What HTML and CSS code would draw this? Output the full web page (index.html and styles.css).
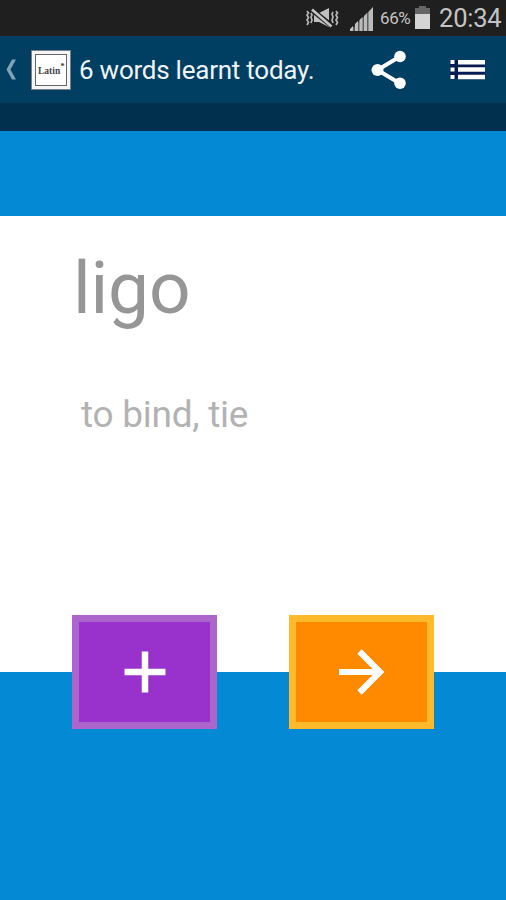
FILE: index.html
```html
<!DOCTYPE html>
<html lang="en">
<head>
<meta charset="utf-8">
<title>Latin words</title>
<link rel="stylesheet" href="styles.css">
</head>
<body>
<div class="app">
  <div class="status">
    <svg class="mute" width="34" height="22" viewBox="0 0 34 22">
      <path d="M9 6h5l10-5v19l-10-5H9z" fill="#c0c0c0"/>
      <path d="M7 3l20 16" stroke="#1f1f1f" stroke-width="5"/>
      <path d="M7 2.500l19.500 17" stroke="#c4c4c4" stroke-width="2.600"/>
      <path d="M2 4l1.500 2L2 8l1.500 2.500L2 13l1.500 2.500L2 18M6 6l1 2-1 2 1 3-1 3M28 5l-1 2 1 3-1 3 1 3M31 4l1.500 2L31 8l1.500 2.500L31 13l1.500 2.500L31 18" fill="none" stroke="#b5b5b5" stroke-width="1.700"/>
    </svg>
    <svg class="signal" width="24" height="26" viewBox="0 0 24 26">
      <path d="M0 25v-2l3-3v5zM5 25v-7l3-3v10zM9.500 25V14l3-3v14zM14 25V10l3-3v18zM18.500 25V6L23 1v24z" fill="#c8c8c8"/>
      <path d="M0 25L23 1v24z" fill="#aaa" opacity=".45"/>
    </svg>
    <span class="percent">66%</span>
    <svg class="battery" width="17" height="24" viewBox="0 0 17 24">
      <path d="M5 0h7v2h4v7H1V2h4z" fill="#666"/>
      <path d="M1 8h15v15H1z" fill="#d5d5d5"/>
    </svg>
    <span class="clock">20:34</span>
  </div>
  <header class="bar">
    <svg class="back" width="12" height="24" viewBox="0 0 12 24"><path d="M7 1.500h4L5.500 11.500 11 21.500H7L1.500 11.500z" fill="#7fa2b6"/></svg>
    <div class="logo"><div class="frame"><span class="word">Latin</span><span class="star">*</span></div></div>
    <h1 class="title">6 words learnt today.</h1>
    <svg class="share" width="36" height="40" viewBox="0 0 36 40">
      <path d="M29 6.500L6.500 20 29 33.500" fill="none" stroke="#fff" stroke-width="4"/>
      <circle cx="29" cy="6.500" r="5.800" fill="#fff"/><circle cx="6.500" cy="20" r="6" fill="#fff"/><circle cx="29" cy="33.200" r="5.800" fill="#fff"/>
    </svg>
    <svg class="list" width="36" height="20" viewBox="0 0 36 20">
      <path d="M0 0h35v19H0z" fill="#061b52"/>
      <path d="M.5 0h4v4h-4zM8 0h27v4.500H8zM.5 7.500h4v4h-4zM8 7.300h27v4.500H8zM.5 15h4v4h-4zM8 14.700h27v4.500H8z" fill="#fff"/>
    </svg>
  </header>
  <div class="shade"></div>
  <div class="band"></div>
  <main class="card">
    <div class="latin">ligo</div>
    <div class="meaning">to bind, tie</div>
  </main>
  <footer class="foot">
    <div class="btn add"><svg width="42" height="42" viewBox="0 0 42 42"><path d="M21 .5v41M.5 21h41" stroke="#fff" stroke-width="6.500"/></svg></div>
    <div class="btn next"><svg width="46" height="46" viewBox="0 0 46 46"><path d="M0 23h41M20.500 2.500L41 23 20.500 43.500" fill="none" stroke="#fff" stroke-width="6.200"/></svg></div>
  </footer>
</div>
</body>
</html>
```
FILE: styles.css
```css
* { box-sizing: border-box; }
body { margin: 0; font-family: Roboto, sans-serif; }
svg { display: block; flex: none; }
.app { display: flex; flex-direction: column; width: 506px; height: 900px; overflow: hidden; background: #048ad5; }
.status { display: flex; flex: none; height: 36px; padding-left: 305px; background: #1f1f1f; color: #c4c4c4; white-space: nowrap; }
.mute { margin-top: 7px; }
.signal { margin: 6px 0 0 11px; }
.percent { width: 34px; margin-left: 6px; font-size: 17px; line-height: 37px; letter-spacing: -0.4px; }
.battery { margin: 6px 0 0 0; }
.clock { margin-left: 8px; font-size: 25.500px; line-height: 36px; letter-spacing: -0.2px; }
.bar { display: flex; flex: none; align-items: center; height: 67px; padding-left: 5px; background: #003e62; }
.logo { flex: none; width: 40px; height: 40px; margin-left: 14px; padding: 3px; border: 1px solid #777f88; background: #f6f6f6; }
.frame { display: flex; width: 32px; height: 32px; padding: 8px 0 0 2px; border: 1px solid #666; background: #fff; color: #444; font-family: "Liberation Serif", serif; font-weight: bold; font-size: 9.500px; line-height: 17px; }
.star { font-size: 9px; line-height: 7px; }
.title { width: 250px; margin: 1px 0 0 8px; color: #edf4fa; font-size: 26px; font-weight: 400; line-height: 36px; letter-spacing: -0.24px; white-space: nowrap; }
.share { margin-left: 42px; }
.list { margin-left: 43px; }
.shade { flex: none; height: 28px; background: #00304d; }
.band { flex: none; height: 85px; background: #048ad5; }
.card { flex: none; height: 456px; padding: 27px 0 0 73px; background: #fff; }
.latin { height: 90px; color: #969696; font-size: 73px; line-height: 90px; letter-spacing: -0.2px; }
.meaning { margin: 60px 0 0 8px; color: #b2b2b2; font-size: 37px; line-height: 44px; letter-spacing: -0.26px; }
.foot { display: flex; gap: 72px; padding-left: 72px; }
.btn { display: flex; align-items: center; justify-content: center; width: 145px; height: 114px; margin-top: -57px; border: 7px solid; }
.add { border-color: #ac65ca; background: #9932cc; }
.next { border-color: #ffb92c; background: #ff8a00; }
```
